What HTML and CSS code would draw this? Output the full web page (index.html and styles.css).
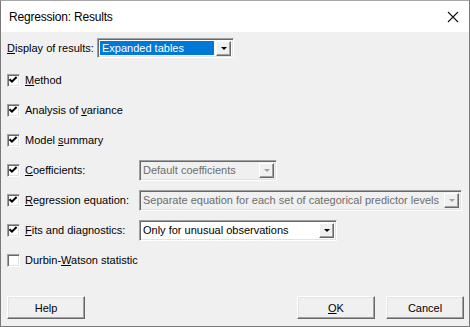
FILE: index.html
```html
<!DOCTYPE html>
<html>
<head>
    <title>Regression: Results</title>
    <link rel="stylesheet" href="styles.css">
</head>
<body>
<div class="window">
    <div class="titlebar">
        <span class="title">Regression: Results</span>
        <svg class="close" width="12" height="12" viewBox="0 0 12 12"><path d="M1 1L11 11M11 1L1 11" stroke="#111" stroke-width="1.1" fill="none"/></svg>
    </div>

    <div class="content">
        <div class="display-row">
            <span class="label-text"><u>D</u>isplay of results:</span>
            <div class="combo display-combo">
                <span class="combo-value selected">Expanded tables</span>
                <span class="drop"><i class="arrow"></i></span>
            </div>
        </div>

        <div class="option">
            <span class="check"><svg viewBox="0 0 11 11"><path d="M1.5 4.3L3.9 6.7L8.6 2" /></svg></span>
            <span class="opt-label"><u>M</u>ethod</span>
        </div>
        <div class="option">
            <span class="check"><svg viewBox="0 0 11 11"><path d="M1.5 4.3L3.9 6.7L8.6 2" /></svg></span>
            <span class="opt-label">Analysis of <u>v</u>ariance</span>
        </div>
        <div class="option">
            <span class="check"><svg viewBox="0 0 11 11"><path d="M1.5 4.3L3.9 6.7L8.6 2" /></svg></span>
            <span class="opt-label">Model <u>s</u>ummary</span>
        </div>
        <div class="option">
            <span class="check"><svg viewBox="0 0 11 11"><path d="M1.5 4.3L3.9 6.7L8.6 2" /></svg></span>
            <span class="opt-label fixed"><u>C</u>oefficients:</span>
            <div class="combo disabled coef-combo">
                <span class="combo-value">Default coefficients</span>
                <span class="drop"><i class="arrow"></i></span>
            </div>
        </div>
        <div class="option">
            <span class="check"><svg viewBox="0 0 11 11"><path d="M1.5 4.3L3.9 6.7L8.6 2" /></svg></span>
            <span class="opt-label fixed"><u>R</u>egression equation:</span>
            <div class="combo disabled eq-combo">
                <span class="combo-value">Separate equation for each set of categorical predictor levels</span>
                <span class="drop"><i class="arrow"></i></span>
            </div>
        </div>
        <div class="option">
            <span class="check"><svg viewBox="0 0 11 11"><path d="M1.5 4.3L3.9 6.7L8.6 2" /></svg></span>
            <span class="opt-label fixed"><u>F</u>its and diagnostics:</span>
            <div class="combo fits-combo">
                <span class="combo-value">Only for unusual observations</span>
                <span class="drop"><i class="arrow"></i></span>
            </div>
        </div>
        <div class="option">
            <span class="check"></span>
            <span class="opt-label">Durbin-<u>W</u>atson statistic</span>
        </div>
    </div>

    <div class="footer">
        <button class="btn">Help</button>
        <span class="spacer"></span>
        <button class="btn"><u>O</u>K</button>
        <button class="btn">Cancel</button>
    </div>
</div>
</body>
</html>
```

FILE: styles.css
```css
body {
    margin: 0;
    padding: 0;
    background-color: #f0f0f0;
    font-family: 'Liberation Sans', Arial, sans-serif;
    font-size: 11px;
    color: #000;
}

.window {
    width: 470px;
    height: 327px;
    box-sizing: border-box;
    border: 1px solid #7a7a7a;
    border-top-color: #a8a8a8;
    background-color: #f0f0f0;
    display: flex;
    flex-direction: column;
}

.titlebar {
    height: 31px;
    flex: none;
    background-color: #fff;
    display: flex;
    align-items: center;
    justify-content: space-between;
    padding: 0 10px 0 8px;
}

.title {
    font-size: 12px;
    letter-spacing: -0.2px;
    color: #000;
}

.close {
    display: block;
}

.content {
    padding: 6px 6px 0 6px;
    display: flex;
    flex-direction: column;
}

.display-row {
    display: flex;
    align-items: center;
    height: 20px;
    margin-bottom: 7px;
}

.label-text {
    width: 90px;
}

/* sunken 3d box */
.combo {
    display: flex;
    align-items: center;
    box-sizing: border-box;
    height: 21px;
    padding: 2px;
    border: 1px solid;
    border-color: #a0a0a0 #fff #fff #a0a0a0;
    box-shadow: inset 1px 1px 0 #696969, inset -1px -1px 0 #e3e3e3;
    background-color: #fff;
}

.combo-value {
    flex: 1;
    height: 100%;
    display: flex;
    align-items: center;
    padding-left: 1px;
    white-space: nowrap;
    overflow: hidden;
}

.combo-value.selected {
    background-color: #0078d7;
    color: #fff;
    padding-left: 2px;
    margin-right: 2px;
}

.display-combo {
    width: 137px;
    height: 20px;
}

.coef-combo {
    width: 138px;
}

.eq-combo {
    width: 323px;
}

.fits-combo {
    width: 198px;
}

.combo.disabled {
    background-color: #f0f0f0;
    color: #6d6d6d;
}

.drop {
    width: 15px;
    height: 15px;
    box-sizing: border-box;
    flex: none;
    display: flex;
    align-items: center;
    justify-content: center;
    background-color: #f0f0f0;
    border: 1px solid;
    border-color: #fff #696969 #696969 #fff;
    box-shadow: inset -1px -1px 0 #a0a0a0;
}

.arrow {
    width: 0;
    height: 0;
    border-left: 3px solid transparent;
    border-right: 3px solid transparent;
    border-top: 3px solid #000;
    margin-top: 1px;
}

.disabled .arrow {
    border-top-color: #a0a0a0;
}

.option {
    display: flex;
    align-items: center;
    height: 30px;
}

.check {
    width: 13px;
    height: 13px;
    box-sizing: border-box;
    flex: none;
    border: 1px solid;
    border-color: #a0a0a0 #fff #fff #a0a0a0;
    box-shadow: inset 1px 1px 0 #696969, inset -1px -1px 0 #e3e3e3;
    background-color: #fff;
    margin-right: 5px;
}

.check svg {
    display: block;
    width: 11px;
    height: 11px;
}

.check path {
    fill: none;
    stroke: #000;
    stroke-width: 2;
}

.opt-label.fixed {
    width: 114px;
}

.footer {
    margin-top: auto;
    display: flex;
    padding: 0 5px 7px 6px;
    gap: 11px;
}

.spacer {
    flex: 1;
}

.btn {
    width: 78px;
    height: 23px;
    box-sizing: border-box;
    font-family: 'Liberation Sans', Arial, sans-serif;
    font-size: 11px;
    color: #000;
    background-color: #f0f0f0;
    border: 1px solid;
    border-color: #fff #696969 #696969 #fff;
    box-shadow: inset -1px -1px 0 #a0a0a0, inset 1px 1px 0 #e3e3e3;
    padding: 0;
}
```
